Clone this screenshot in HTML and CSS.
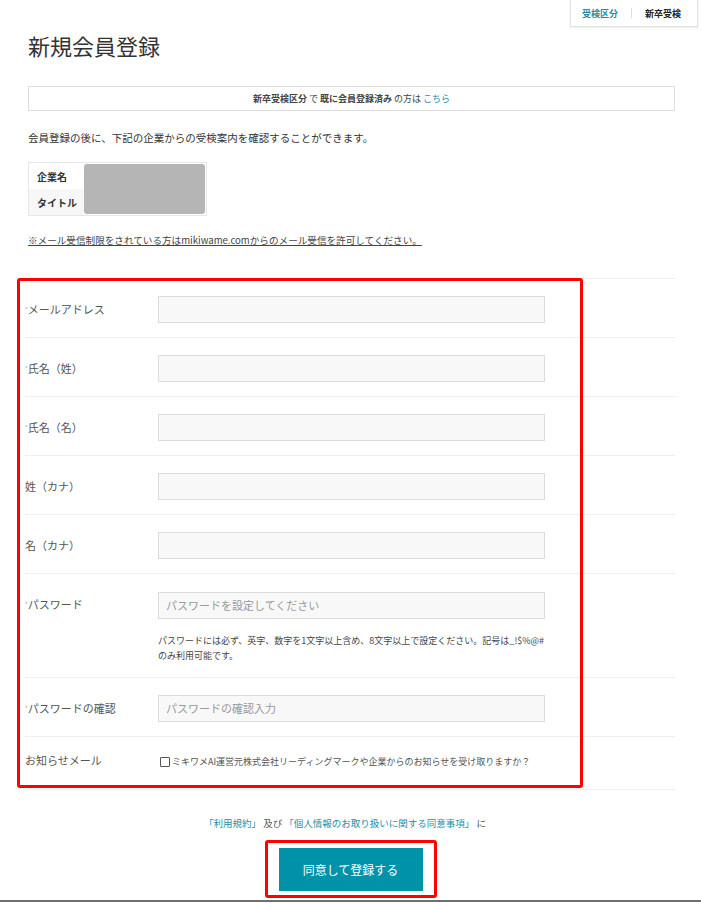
FILE: index.html
```html
<!DOCTYPE html>
<html lang="ja">
<head>
    <meta charset="UTF-8">
    <title>新規会員登録</title>
    <link rel="stylesheet" href="styles.css">
</head>
<body>
<div class="page">
    <div class="topbar">
        <div class="exam-tabs">
            <a href="#" class="tab-label">受検区分</a>
            <span class="tab-sep"></span>
            <span class="tab-current">新卒受検</span>
        </div>
    </div>

    <main class="content">
        <h1 class="page-title">新規会員登録</h1>

        <p class="login-box"><strong>新卒受検区分</strong> で <strong>既に会員登録済み</strong> の方は <a href="#">こちら</a></p>

        <p class="intro">会員登録の後に、下記の企業からの受検案内を確認することができます。</p>

        <div class="company">
            <div class="company-label">企業名</div>
            <div class="company-value"></div>
            <div class="company-label alt">タイトル</div>
        </div>

        <p class="mail-note"><a href="#">※メール受信制限をされている方はmikiwame.comからのメール受信を許可してください。</a></p>

        <form class="reg-form">
            <div class="form-row">
                <label><span class="req">*</span>メールアドレス</label>
                <input type="text">
            </div>
            <div class="form-row">
                <label><span class="req">*</span>氏名（姓）</label>
                <input type="text">
            </div>
            <div class="form-row">
                <label><span class="req">*</span>氏名（名）</label>
                <input type="text">
            </div>
            <div class="form-row">
                <label>姓（カナ）</label>
                <input type="text">
            </div>
            <div class="form-row">
                <label>名（カナ）</label>
                <input type="text">
            </div>
            <div class="form-row">
                <label><span class="req">*</span>パスワード</label>
                <div class="field">
                    <input type="password" placeholder="パスワードを設定してください">
                    <p class="hint">パスワードには必ず、英字、数字を1文字以上含め、8文字以上で設定ください。記号は_!$%@#のみ利用可能です。</p>
                </div>
            </div>
            <div class="form-row">
                <label><span class="req">*</span>パスワードの確認</label>
                <input type="password" placeholder="パスワードの確認入力">
            </div>
            <div class="form-row notice-row">
                <label>お知らせメール</label>
                <label class="check"><input type="checkbox">ミキワメAI運営元株式会社リーディングマークや企業からのお知らせを受け取りますか？</label>
            </div>
        </form>

        <p class="terms"><a href="#">「利用規約」</a> 及び <a href="#">「個人情報のお取り扱いに関する同意事項」</a> に</p>

        <div class="submit-wrap">
            <button type="button" class="submit-btn">同意して登録する</button>
        </div>
    </main>

    <div class="bottom-edge"></div>
</div>

<!-- annotation frames drawn over the page -->
<div class="mark mark-form"></div>
<div class="mark mark-button"></div>
</body>
</html>
```

FILE: styles.css
```css
body {
    color: #333;
    font-family: "Noto Sans CJK JP", "Noto Sans", sans-serif;
    margin: 0;
    position: relative;
}

a {
    color: #1a8fa8;
    text-decoration: none;
}

p {
    margin: 0;
}

.page {
    width: 701px;
}

/* top right exam type box */
.topbar {
    display: flex;
    justify-content: flex-end;
    padding-right: 3px;
}

.exam-tabs {
    align-items: center;
    border: 1px solid #e2e2e2;
    border-top: none;
    box-shadow: 0 1px 2px rgba(0, 0, 0, 0.08);
    display: flex;
    font-size: 9px;
    font-weight: bold;
    gap: 13px;
    height: 26px;
    padding: 0 16px 0 11px;
}

.tab-sep {
    background: #ddd;
    height: 10px;
    width: 1px;
}

.tab-current {
    color: #222;
}

.content {
    padding: 0 26px 0 28px;
}

.page-title {
    color: #333;
    font-size: 22px;
    font-weight: normal;
    line-height: 30px;
    margin: 3px 0 0;
}

.login-box {
    border: 1px solid #dedede;
    color: #444;
    font-size: 9px;
    line-height: 23px;
    margin-top: 26px;
    text-align: center;
}

.intro {
    font-size: 10.5px;
    line-height: 18px;
    margin-top: 18px;
}

/* company info */
.company {
    border: 1px solid #e6e6e6;
    display: grid;
    grid-template-columns: 55px 1fr;
    grid-template-rows: 26px 26px;
    margin-top: 15px;
    width: 177px;
}

.company-label {
    align-items: center;
    display: flex;
    font-size: 10px;
    font-weight: bold;
    padding-left: 8px;
}

.company-label.alt {
    background: #f7f7f7;
}

.company-value {
    background: #b5b5b5;
    border-radius: 3px;
    grid-column: 2;
    grid-row: 1 / 3;
    margin: 1px 1px 1px 0;
}

.mail-note {
    font-size: 9.6px;
    line-height: 18px;
    margin-top: 15px;
}

.mail-note a {
    color: #444;
    text-decoration: underline;
}

/* registration form */
.reg-form {
    border-top: 1px solid #eee;
    margin: 29px 0 0 -3px;
}

.form-row {
    border-bottom: 1px solid #eee;
    display: grid;
    grid-template-columns: 133px 387px;
    padding: 17px 0 14px;
}

.form-row > label {
    color: #555;
    font-size: 11px;
    line-height: 27px;
}

.req {
    color: #aaa;
    font-size: 6px;
    vertical-align: top;
}

.form-row input[type="text"],
.form-row input[type="password"] {
    background: #f8f8f8;
    border: 1px solid #dcdcdc;
    box-sizing: border-box;
    font-family: inherit;
    font-size: 11px;
    height: 27px;
    margin: 0;
    padding: 0 7px;
    width: 387px;
}

.form-row input::placeholder {
    color: #999;
}

.hint {
    color: #444;
    font-size: 9px;
    line-height: 15px;
    margin-top: 14px;
}

.notice-row {
    padding: 14px 0 18px;
}

.notice-row > label {
    line-height: 18px;
}

.form-row .check {
    align-items: center;
    color: #555;
    display: flex;
    font-size: 9px;
    line-height: 18px;
    padding-top: 2px;
}

.check input {
    appearance: none;
    border: 1px solid #555;
    border-radius: 1px;
    height: 10px;
    margin: 0 2px 0 2px;
    width: 10px;
}

.terms {
    color: #555;
    font-size: 9.5px;
    line-height: 18px;
    margin-top: 24px;
    padding-right: 13px;
    text-align: center;
}

.submit-wrap {
    display: flex;
    justify-content: center;
    margin-top: 16px;
    padding-right: 2px;
}

.submit-btn {
    background: #0092a8;
    border: none;
    color: #fff;
    font-family: inherit;
    font-size: 12px;
    height: 43px;
    width: 144px;
}

.bottom-edge {
    background: #6f6f6f;
    height: 2px;
    margin-top: 9px;
}

/* red annotation frames */
.mark {
    border: 3px solid #ff0000;
    border-radius: 3px;
    box-sizing: border-box;
    position: absolute;
}

.mark-form {
    height: 510px;
    left: 17px;
    top: 278px;
    width: 566px;
}

.mark-button {
    height: 58px;
    left: 265px;
    top: 840px;
    width: 172px;
}
```
